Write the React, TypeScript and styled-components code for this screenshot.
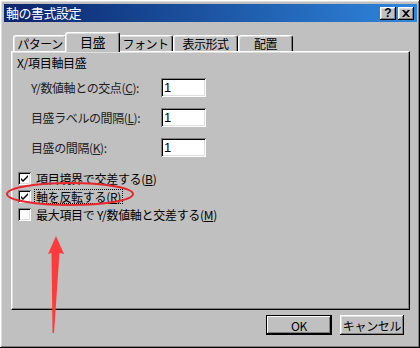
import styled, { createGlobalStyle, css } from "styled-components";

const Global = createGlobalStyle`
  html, body { margin: 0; padding: 0; background: #c0c0c0; }
  body { font-family: "Noto Sans CJK JP", "Liberation Sans", sans-serif; font-size: 12px; color: #000; }
`;

const raised = css`
  box-shadow: inset -1px -1px #000, inset 1px 1px #fff, inset -2px -2px #808080, inset 2px 2px #dfdfdf;
`;

const sunken = css`
  box-shadow: inset 1px 1px #808080, inset -1px -1px #fff, inset 2px 2px #000, inset -2px -2px #dfdfdf;
`;

const Window = styled.div`
  position: relative;
  width: 420px;
  height: 348px;
  box-sizing: border-box;
  padding: 4px 3px 3px 4px;
  background: #c0c0c0;
  display: flex;
  flex-direction: column;
  ${raised};
`;

const TitleBar = styled.div`
  height: 18px;
  display: flex;
  align-items: center;
  justify-content: space-between;
  padding: 0 3px 0 2px;
  background: linear-gradient(to right, #0a246a, #2f86dd);
  color: #fff;
`;

const Title = styled.span`
  font-size: 13px;
  line-height: 18px;
  letter-spacing: -0.5px;
`;

const TitleButtons = styled.div`
  display: flex;
  gap: 2px;
`;

const TitleButton = styled.div`
  width: 16px;
  height: 13px;
  background: #c0c0c0;
  color: #000;
  font-family: "Liberation Sans", sans-serif;
  font-weight: bold;
  font-size: 12px;
  line-height: 13px;
  text-align: center;
  ${raised};
`;

const Body = styled.div`
  flex: 1;
  display: flex;
  flex-direction: column;
  padding: 11px 7px 0 7px;
`;

const TabRow = styled.div`
  display: flex;
  align-items: flex-end;
  height: 19px;
  padding-left: 2px;
  position: relative;
  z-index: 1;
  margin-bottom: -1px;
`;

const Tab = styled.div<{ $w: number; $active?: boolean }>`
  box-sizing: border-box;
  width: ${(p) => p.$w + (p.$active ? 4 : 0)}px;
  height: ${(p) => (p.$active ? 20 : 16)}px;
  margin: 0 ${(p) => (p.$active ? -2 : 0)}px ${(p) => (p.$active ? 0 : 1)}px;
  position: relative;
  z-index: ${(p) => (p.$active ? 2 : 0)};
  background: #c0c0c0;
  border-top: 1px solid #fff;
  border-left: 1px solid #fff;
  border-right: 1px solid #000;
  border-radius: 3px 3px 0 0;
  box-shadow: inset -1px 0 #808080, inset 1px 1px #dfdfdf;
  display: flex;
  align-items: center;
  justify-content: center;
  font-size: ${(p) => (p.$active ? 13 : 12)}px;
  padding-bottom: ${(p) => (p.$active ? 2 : 0)}px;
  letter-spacing: -0.5px;
`;

const Panel = styled.div`
  height: 259px;
  box-sizing: border-box;
  border-top: 1px solid #fff;
  border-left: 1px solid #fff;
  border-right: 1px solid #000;
  border-bottom: 1px solid #000;
  box-shadow: inset -1px -1px #808080, inset 1px 1px #dfdfdf;
  padding: 4px 0 0 5px;
  display: flex;
  flex-direction: column;
`;

const GroupLabel = styled.div`
  line-height: 14px;
  height: 14px;
  letter-spacing: -0.3px;
`;

const FieldList = styled.div`
  display: flex;
  flex-direction: column;
  gap: 11px;
  padding: 8px 0 0 14px;
`;

const FieldRow = styled.div`
  display: flex;
  align-items: center;
  height: 19px;
`;

const FieldLabel = styled.label`
  width: 130px;
  letter-spacing: -0.4px;
  color: #222;
`;

const NumberBox = styled.div`
  width: 45px;
  height: 19px;
  box-sizing: border-box;
  background: #fff;
  padding: 2px 3px;
  font-family: "Liberation Sans", sans-serif;
  font-size: 13px;
  line-height: 15px;
  ${sunken};
`;

const CheckList = styled.div`
  display: flex;
  flex-direction: column;
  gap: 4px;
  padding: 14px 0 0 1px;
`;

const CheckRow = styled.div`
  display: flex;
  align-items: center;
  gap: 4px;
  height: 14px;
`;

const Box = styled.div`
  width: 13px;
  height: 13px;
  box-sizing: border-box;
  background: #fff;
  display: flex;
  align-items: center;
  justify-content: center;
  ${sunken};
`;

const CheckText = styled.span<{ $focus?: boolean }>`
  letter-spacing: -0.3px;
  line-height: 13px;
  padding: 0 1px;
  outline: ${(p) => (p.$focus ? "1px dotted #000" : "none")};
`;

const U = styled.span`
  text-decoration: underline;
`;

const Footer = styled.div`
  display: flex;
  justify-content: flex-end;
  gap: 8px;
  padding: 5px 6px 0 0;
`;

const Button = styled.div<{ $default?: boolean; $w: number }>`
  width: ${(p) => p.$w}px;
  height: 20px;
  box-sizing: border-box;
  display: flex;
  align-items: center;
  justify-content: center;
  letter-spacing: -0.3px;
  ${(p) =>
    p.$default
      ? css`
          border: 1px solid #000;
          box-shadow: inset -1px -1px #000, inset 1px 1px #fff, inset -2px -2px #808080;
        `
      : raised};
`;

const Overlay = styled.svg`
  position: absolute;
  left: 0;
  top: 0;
  pointer-events: none;
`;

function Check({ on }: { on: boolean }) {
  return (
    <Box>
      {on && (
        <svg width="9" height="9" viewBox="0 0 9 9">
          <path d="M1 4 L3 6 L8 1 L8 3 L3 8 L1 6 Z" fill="#000" />
        </svg>
      )}
    </Box>
  );
}

const tabs = [
  { label: "パターン", w: 54 },
  { label: "目盛", w: 51, active: true },
  { label: "フォント", w: 55 },
  { label: "表示形式", w: 65 },
  { label: "配置", w: 55 },
];

export default function App() {
  return (
    <>
      <Global />
      <Window>
        <TitleBar>
          <Title>軸の書式設定</Title>
          <TitleButtons>
            <TitleButton>?</TitleButton>
            <TitleButton>
              <svg width="8" height="7" viewBox="0 0 8 7">
                <path d="M0 0 L2 0 L4 2 L6 0 L8 0 L5 3.5 L8 7 L6 7 L4 5 L2 7 L0 7 L3 3.5 Z" fill="#000" />
              </svg>
            </TitleButton>
          </TitleButtons>
        </TitleBar>
        <Body>
          <TabRow>
            {tabs.map((t) => (
              <Tab key={t.label} $w={t.w} $active={t.active}>
                {t.label}
              </Tab>
            ))}
          </TabRow>
          <Panel>
            <GroupLabel>X/項目軸目盛</GroupLabel>
            <FieldList>
              <FieldRow>
                <FieldLabel>
                  Y/数値軸との交点(<U>C</U>):
                </FieldLabel>
                <NumberBox>1</NumberBox>
              </FieldRow>
              <FieldRow>
                <FieldLabel>
                  目盛ラベルの間隔(<U>L</U>):
                </FieldLabel>
                <NumberBox>1</NumberBox>
              </FieldRow>
              <FieldRow>
                <FieldLabel>
                  目盛の間隔(<U>K</U>):
                </FieldLabel>
                <NumberBox>1</NumberBox>
              </FieldRow>
            </FieldList>
            <CheckList>
              <CheckRow>
                <Check on />
                <CheckText>
                  項目境界で交差する(<U>B</U>)
                </CheckText>
              </CheckRow>
              <CheckRow>
                <Check on />
                <CheckText $focus>
                  軸を反転する(<U>R</U>)
                </CheckText>
              </CheckRow>
              <CheckRow>
                <Check on={false} />
                <CheckText>
                  最大項目で Y/数値軸と交差する(<U>M</U>)
                </CheckText>
              </CheckRow>
            </CheckList>
          </Panel>
          <Footer>
            <Button $default $w={66}>OK</Button>
            <Button $w={64}>キャンセル</Button>
          </Footer>
        </Body>
        <Overlay width="420" height="348" viewBox="0 0 420 348">
          <ellipse cx="70" cy="194" rx="63" ry="11" fill="none" stroke="#e8262c" strokeWidth="2" />
          <path d="M56 236 L64 254 L59.5 253 L54 333 L52.5 333 L51.5 253 L48 254 Z" fill="#ff3a3a" />
        </Overlay>
      </Window>
    </>
  );
}
